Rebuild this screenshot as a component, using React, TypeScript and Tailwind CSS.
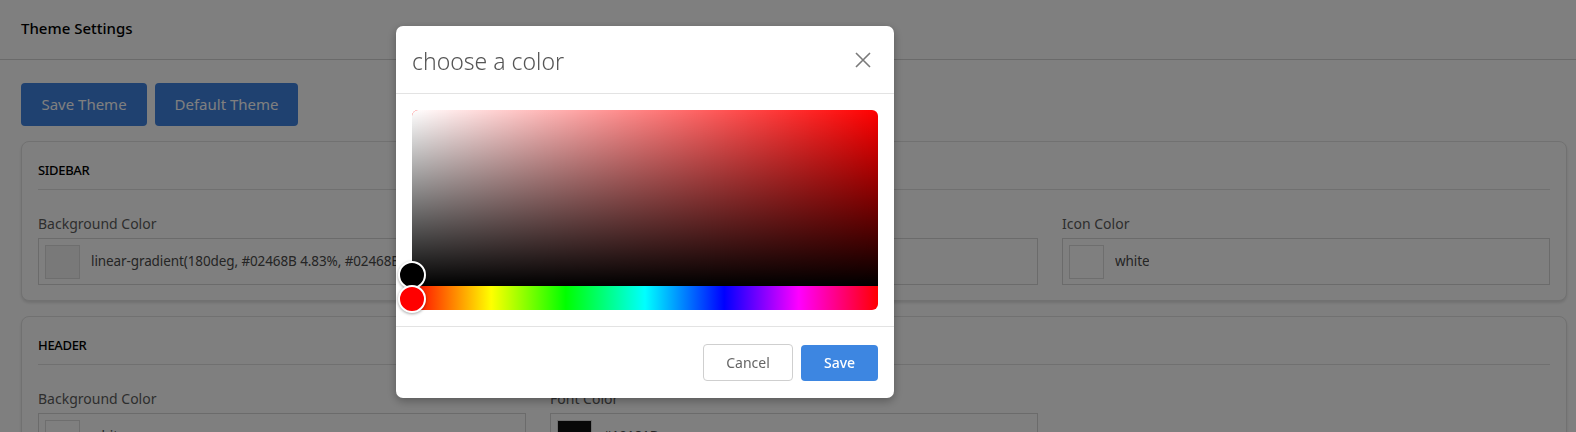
import React from "react";

const font = { fontFamily: '"Noto Sans", "Open Sans", sans-serif' };

interface FieldProps {
  label: string;
  value: string;
  swatch: string;
}

function ColorField({ label, value, swatch }: FieldProps) {
  return (
    <div className="flex flex-col">
      <div className="mb-[4px] text-[14px] leading-[20px] text-[#5c5c5c]">{label}</div>
      <div className="flex h-[47px] items-center border border-[#d6d6d6] bg-white px-[6px]">
        <div className={`h-[34px] w-[35px] shrink-0 border border-[#dcdcdc] ${swatch}`} />
        <span className="ml-[11px] truncate text-[13.5px] tracking-[-0.1px] text-[#4a4a4a]">{value}</span>
      </div>
    </div>
  );
}

function Section({ title, children }: { title: string; children: React.ReactNode }) {
  return (
    <div className="rounded-[8px] border border-[#e2e2e2] bg-white px-[16px] shadow-[0_2px_3px_rgba(0,0,0,0.12)]">
      <div className="flex h-[48px] items-end border-b border-[#e0e0e0] pb-[9px] text-[13px] font-medium tracking-tight text-black">
        {title}
      </div>
      <div className="grid grid-cols-3 gap-x-[24px] pt-[24px] pb-[15px]">{children}</div>
    </div>
  );
}

function ColorPicker() {
  return (
    <div className="fixed inset-0 z-10 bg-black/50">
      <div className="absolute left-[396px] top-[26px] w-[498px] rounded-[7px] bg-white shadow-[0_3px_10px_rgba(0,0,0,0.3)]">
        <div className="flex h-[68px] items-center justify-between border-b border-[#e3e3e3] pl-[16px] pr-[16px]">
          <span className="pt-[3px] text-[23px] font-light text-[#555]">choose a color</span>
          <svg width="16" height="16" viewBox="0 0 16 16" className="mr-[7px]">
            <path d="M1 1 L15 15 M15 1 L1 15" stroke="#7a7a7a" strokeWidth="1.6" />
          </svg>
        </div>
        <div className="border-b border-[#e3e3e3] p-[16px]">
          <div className="relative">
            <div className="h-[176px] rounded-t-[6px] bg-[#ff0000]">
              <div className="h-full rounded-t-[6px] bg-gradient-to-r from-white to-transparent">
                <div className="h-full rounded-t-[6px] bg-gradient-to-b from-transparent to-black" />
              </div>
            </div>
            <div className="h-[24px] rounded-b-[6px] bg-[linear-gradient(to_right,#f00_0%,#ff0_17%,#0f0_33%,#0ff_50%,#00f_67%,#f0f_83%,#f00_100%)]" />
            <div className="absolute left-[-14px] top-[151px] h-[28px] w-[28px] rounded-full border-2 border-white bg-black shadow-[0_1px_3px_rgba(0,0,0,0.35)]" />
            <div className="absolute left-[-14px] top-[175px] h-[28px] w-[28px] rounded-full border-2 border-white bg-[#ff0000] shadow-[0_1px_3px_rgba(0,0,0,0.35)]" />
          </div>
        </div>
        <div className="flex h-[71px] items-center justify-end gap-[8px] pr-[16px]">
          <button className="h-[37px] w-[90px] rounded-[4px] border border-[#cfcfcf] bg-white text-[14px] text-[#666]">
            Cancel
          </button>
          <button className="h-[36px] w-[77px] rounded-[4px] bg-[#3d86e1] text-[14px] font-medium text-white">
            Save
          </button>
        </div>
      </div>
    </div>
  );
}

export default function App() {
  return (
    <div className="relative h-[432px] overflow-hidden bg-white" style={font}>
      <div className="flex h-[60px] items-center border-b border-[#d4d4d4] px-[21px] pb-[3px] text-[15px] font-medium text-black">
        Theme Settings
      </div>
      <div className="px-[21px] pr-[9px]">
        <div className="flex gap-[8px] pt-[23px]">
          <button className="h-[43px] w-[126px] rounded-[4px] bg-[#3e82e0] text-[15px] text-white">Save Theme</button>
          <button className="h-[43px] w-[143px] rounded-[4px] bg-[#3e82e0] text-[15px] text-white">Default Theme</button>
        </div>
        <div className="mt-[15px] flex flex-col gap-[15px]">
          <Section title="SIDEBAR">
            <ColorField
              label="Background Color"
              value="linear-gradient(180deg, #02468B 4.83%, #02468B 100%)"
              swatch="bg-[#f2f2f2]"
            />
            <ColorField label="Font Color" value="white" swatch="bg-white" />
            <ColorField label="Icon Color" value="white" swatch="bg-white" />
          </Section>
          <Section title="HEADER">
            <ColorField label="Background Color" value="white" swatch="bg-white" />
            <ColorField label="Font Color" value="#10181B" swatch="bg-[#111]" />
            <div />
          </Section>
        </div>
      </div>
      <ColorPicker />
    </div>
  );
}
